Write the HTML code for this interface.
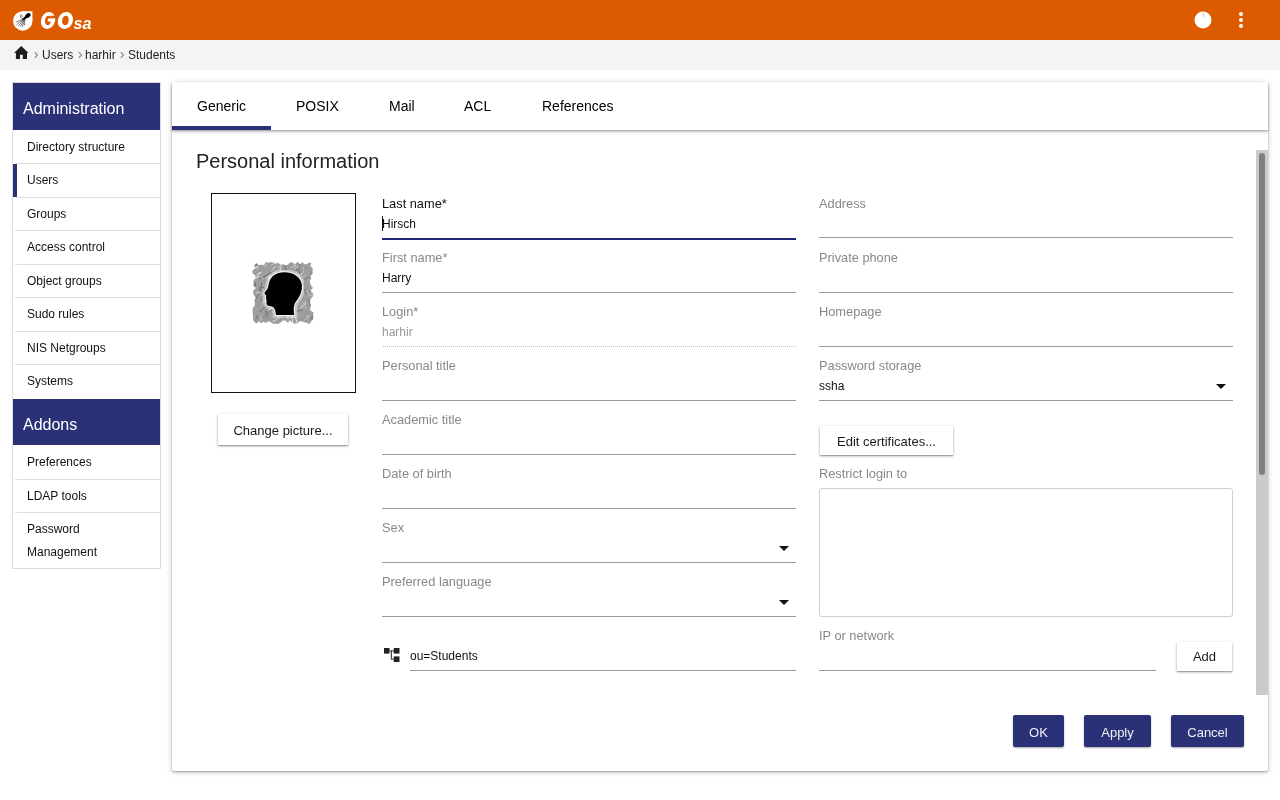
<!DOCTYPE html>
<html><head><meta charset="utf-8">
<style>
*{box-sizing:border-box;margin:0;padding:0}
html,body{will-change:transform;width:1280px;height:800px;overflow:hidden;background:#fff;font-family:"Liberation Sans",sans-serif;color:#222}
.abs{position:absolute}
#hdr{position:absolute;left:0;top:0;width:1280px;height:40px;background:#dc5b00}
#crumb{position:absolute;left:0;top:40px;width:1280px;height:30px;background:#f4f4f4}
.bc{position:absolute;top:48px;font-size:12px;line-height:14px;color:#222;white-space:nowrap}
.chev{position:absolute;top:51px;width:6px;height:8px}
#side{position:absolute;left:12px;top:82px;width:149px;height:487px;border:1px solid #dcdcdc;background:#fff}
.shd{position:absolute;left:13px;width:147px;height:47px;background:#2a3177;color:#fff;font-size:16px;line-height:20px;padding-left:10px;padding-top:16px}
.mt{position:absolute;left:27px;font-size:12px;line-height:14px;color:#111;white-space:nowrap}
.dv{position:absolute;left:13px;width:147px;height:1px;background:linear-gradient(to right,rgba(222,222,222,0) 0px,#dedede 4px)}
#panel{position:absolute;left:172px;top:82px;width:1096px;height:689px;background:#fff;border-radius:2px;box-shadow:0 1px 2px rgba(0,0,0,.3),0 1px 6px rgba(0,0,0,.18)}
#tabs{position:absolute;left:172px;top:82px;width:1096px;height:48px;background:#fff;border-radius:2px 2px 0 0;box-shadow:0 1px 1px rgba(0,0,0,.12),0 2px 3px rgba(0,0,0,.25)}
.tab{position:absolute;top:98px;font-size:14px;line-height:16px;color:#000;white-space:nowrap}
.lbl{position:absolute;font-size:12.8px;line-height:15px;color:#888;white-space:nowrap}
.val{position:absolute;font-size:12px;line-height:14px;color:#111;white-space:nowrap}
.ul{position:absolute;height:1px;background:#9a9a9a}
.btnw{position:absolute;background:#fff;border-radius:0;box-shadow:0 1px 3px rgba(0,0,0,.28),0 1px 1px rgba(0,0,0,.22);padding-top:1px;font-size:13px;color:#1a1a1a;text-align:center;white-space:nowrap}
.btnb{position:absolute;background:#2a3177;border-radius:2px;box-shadow:0 1px 2px rgba(0,0,0,.35);padding-top:2px;font-size:13px;color:#f0f0f4;text-align:center;white-space:nowrap;top:715px;height:32px;line-height:32px}
.arrow{position:absolute;width:0;height:0;border-left:5px solid transparent;border-right:5px solid transparent;border-top:5px solid #111}
</style></head><body>
<div id="hdr"></div>
<!-- logo -->
<svg class="abs" style="left:0;top:0" width="100" height="40" viewBox="0 0 100 40">
<circle cx="22.75" cy="20.95" r="9.7" fill="#fff"/><rect x="22.75" y="11.25" width="9.7" height="9.7" fill="#fff"/>
<ellipse cx="27.9" cy="15.5" rx="3" ry="2.1" transform="rotate(-35 27.9 15.5)" fill="#000"/>
<path d="M26.2 16.8 L23.2 19.6" stroke="#000" stroke-width="2.3" stroke-linecap="round"/>
<path d="M23.5 19 L15.5 22.2 M23.5 19.3 L16.5 24.6 M23.8 19.6 L18.2 26.2 M24.2 19.8 L20.3 26.6 M24.5 20 L22.3 26.9 M25 20 L24.3 25.6" stroke="#555" stroke-width="0.75"/>
<path d="M22.6 18.6 C20.3 18 19.6 15.6 20.8 15.1 C21.8 14.8 22.4 15.8 22.4 17" stroke="#333" stroke-width="0.7" fill="none"/>
<g transform="translate(48.0 20.45) skewX(-7)">
<path d="M-7.1 0 A7.1 8.45 0 1 0 7.1 0 A7.1 8.45 0 1 0 -7.1 0 Z M-3.0 0 A3.0 4.7 0 1 0 3.0 0 A3.0 4.7 0 1 0 -3.0 0 Z" fill="#fff" fill-rule="evenodd"/>
<rect x="1.8" y="-4.75" width="6.5" height="2.7" fill="#dc5b00"/>
<rect x="-0.2" y="-1.95" width="7.3" height="3.1" fill="#fff"/>
</g>
<g transform="translate(65.4 20.45) skewX(-7)">
<path d="M-7.6 0 A7.6 8.45 0 1 0 7.6 0 A7.6 8.45 0 1 0 -7.6 0 Z M-3.3 0 A3.3 4.7 0 1 0 3.3 0 A3.3 4.7 0 1 0 -3.3 0 Z" fill="#fff" fill-rule="evenodd"/>
</g>
<text x="73.5" y="28.6" font-family="Liberation Sans" font-weight="bold" font-style="italic" font-size="17" fill="#fff" textLength="18" lengthAdjust="spacingAndGlyphs">sa</text>
</svg>
<!-- header right -->
<svg class="abs" style="left:1190px;top:8px" width="60" height="24" viewBox="1190 8 60 24">
<circle cx="1203" cy="19.9" r="8.5" fill="#fff"/>
<path d="M1203.4 12.2 V17.2" stroke="#e58040" stroke-width="0.5"/>
<circle cx="1241" cy="14" r="2" fill="#fff"/>
<circle cx="1241" cy="20" r="2" fill="#fff"/>
<circle cx="1241" cy="26" r="2" fill="#fff"/>
</svg>

<div id="crumb"></div>
<svg class="abs" style="left:14px;top:46px" width="15" height="13" viewBox="0 0 15 13"><path d="M7.25 0 L14.5 6.9 H13 V13 H8.8 V8.8 H6 V13 H1.9 V6.9 H0 Z" fill="#1e1e1e"/></svg>
<svg class="chev" style="left:33px" viewBox="0 0 6 8"><path d="M1.8 1.3 L4.5 4 L1.8 6.7" stroke="#8b9bad" stroke-width="1.4" fill="none"/></svg>
<div class="bc" style="left:42px">Users</div>
<svg class="chev" style="left:77px" viewBox="0 0 6 8"><path d="M1.8 1.3 L4.5 4 L1.8 6.7" stroke="#8b9bad" stroke-width="1.4" fill="none"/></svg>
<div class="bc" style="left:85px">harhir</div>
<svg class="chev" style="left:119px" viewBox="0 0 6 8"><path d="M1.8 1.3 L4.5 4 L1.8 6.7" stroke="#8b9bad" stroke-width="1.4" fill="none"/></svg>
<div class="bc" style="left:128px">Students</div>

<!-- sidebar -->
<div id="side"></div>
<div class="shd" style="top:83px;height:47px">Administration</div>
<div class="mt" style="top:140px">Directory structure</div>
<div class="dv" style="top:163px"></div>
<div class="mt" style="top:173px">Users</div>
<div class="dv" style="top:197px"></div>
<div class="mt" style="top:207px">Groups</div>
<div class="dv" style="top:230px"></div>
<div class="mt" style="top:240px">Access control</div>
<div class="dv" style="top:264px"></div>
<div class="mt" style="top:274px">Object groups</div>
<div class="dv" style="top:297px"></div>
<div class="mt" style="top:307px">Sudo rules</div>
<div class="dv" style="top:331px"></div>
<div class="mt" style="top:341px">NIS Netgroups</div>
<div class="dv" style="top:364px"></div>
<div class="mt" style="top:374px">Systems</div>
<div class="abs" style="left:13px;top:164px;width:4px;height:33px;background:#2a3177"></div>
<div class="shd" style="top:399px;height:46px">Addons</div>
<div class="mt" style="top:455px">Preferences</div>
<div class="dv" style="top:479px"></div>
<div class="mt" style="top:489px">LDAP tools</div>
<div class="dv" style="top:512px"></div>
<div class="mt" style="top:522px">Password</div>
<div class="mt" style="top:545px">Management</div>

<!-- panel -->
<div id="panel"></div>
<div id="tabs"></div>
<div class="abs" style="left:172px;top:126px;width:99px;height:4px;background:#2a3177"></div>
<div class="tab" style="left:197px">Generic</div>
<div class="tab" style="left:296px">POSIX</div>
<div class="tab" style="left:389px">Mail</div>
<div class="tab" style="left:464px">ACL</div>
<div class="tab" style="left:542px">References</div>

<div class="abs" style="left:196px;top:150px;font-size:20px;line-height:23px;color:#222">Personal information</div>

<!-- scrollbar -->
<div class="abs" style="left:1256px;top:150px;width:12px;height:545px;background:#cbcbcb"></div>
<div class="abs" style="left:1259px;top:153px;width:6px;height:322px;border-radius:3px;background:#7b7f80"></div>

<!-- photo -->
<div class="abs" style="left:211px;top:193px;width:145px;height:200px;border:1px solid #111"></div>
<svg class="abs" style="left:245px;top:255px" width="75" height="75" viewBox="0 0 800 800">
<defs><clipPath id="stc"><polygon points="95,115 121,86 147,108 172,102 198,109 224,74 250,83 276,75 302,79 328,93 353,82 379,103 405,99 431,110 457,105 482,77 508,80 534,96 560,72 586,99 612,78 638,101 663,93 689,80 708,90 695,116 723,142 721,169 726,195 700,221 707,248 692,274 694,300 706,326 725,352 699,379 722,405 734,431 706,458 697,484 694,510 703,536 697,562 695,589 734,615 727,641 728,668 725,694 715,697 689,736 663,728 638,717 612,709 586,704 560,731 534,731 508,727 482,695 457,722 431,698 405,698 379,721 353,735 328,733 302,736 276,716 250,706 224,726 198,711 172,728 147,707 121,732 108,720 85,694 88,668 84,641 80,615 80,589 84,562 107,536 104,510 99,484 114,458 97,431 86,405 87,379 116,352 84,326 95,300 89,274 110,248 112,221 78,195 77,169 105,142 101,116"/></clipPath><filter id="bl" x="-5%" y="-5%" width="110%" height="110%"><feGaussianBlur stdDeviation="5"/></filter></defs>
<g clip-path="url(#stc)"><g filter="url(#bl)"><rect x="60" y="60" width="690" height="690" fill="#9e9e9e"/><path d="M525 666 q21 -14 31 61" stroke="#d8d8d8" stroke-width="10" fill="none" stroke-linecap="round"/><path d="M255 321 q19 -12 56 -27" stroke="#c4c4c4" stroke-width="8" fill="none" stroke-linecap="round"/><path d="M231 601 q24 -16 6 78" stroke="#7c7c7c" stroke-width="10" fill="none" stroke-linecap="round"/><path d="M233 416 q10 -6 9 -30" stroke="#e4e4e4" stroke-width="9" fill="none" stroke-linecap="round"/><path d="M212 471 q22 -15 67 -29" stroke="#e4e4e4" stroke-width="12" fill="none" stroke-linecap="round"/><path d="M320 229 q13 -8 20 -37" stroke="#c4c4c4" stroke-width="12" fill="none" stroke-linecap="round"/><path d="M474 91 q21 -14 29 62" stroke="#909090" stroke-width="7" fill="none" stroke-linecap="round"/><path d="M335 538 q17 -11 53 -18" stroke="#909090" stroke-width="8" fill="none" stroke-linecap="round"/><path d="M595 702 q26 -17 57 -66" stroke="#909090" stroke-width="7" fill="none" stroke-linecap="round"/><path d="M716 107 q21 -14 23 65" stroke="#c4c4c4" stroke-width="11" fill="none" stroke-linecap="round"/><path d="M708 504 q11 -8 29 -24" stroke="#d8d8d8" stroke-width="11" fill="none" stroke-linecap="round"/><path d="M548 155 q27 -18 48 75" stroke="#6e6e6e" stroke-width="11" fill="none" stroke-linecap="round"/><path d="M223 249 q20 -13 33 -56" stroke="#e4e4e4" stroke-width="9" fill="none" stroke-linecap="round"/><path d="M616 128 q21 -14 3 70" stroke="#c4c4c4" stroke-width="9" fill="none" stroke-linecap="round"/><path d="M668 406 q9 -6 23 -21" stroke="#7c7c7c" stroke-width="11" fill="none" stroke-linecap="round"/><path d="M473 579 q20 -13 28 -61" stroke="#d8d8d8" stroke-width="9" fill="none" stroke-linecap="round"/><path d="M295 417 q11 -7 4 36" stroke="#c4c4c4" stroke-width="6" fill="none" stroke-linecap="round"/><path d="M211 117 q10 -6 22 -23" stroke="#d8d8d8" stroke-width="9" fill="none" stroke-linecap="round"/><path d="M476 408 q17 -11 49 -29" stroke="#c4c4c4" stroke-width="11" fill="none" stroke-linecap="round"/><path d="M410 246 q26 -17 81 -28" stroke="#c4c4c4" stroke-width="11" fill="none" stroke-linecap="round"/><path d="M218 372 q15 -10 32 -37" stroke="#909090" stroke-width="7" fill="none" stroke-linecap="round"/><path d="M136 512 q12 -8 2 39" stroke="#909090" stroke-width="10" fill="none" stroke-linecap="round"/><path d="M321 249 q22 -15 53 -53" stroke="#d8d8d8" stroke-width="8" fill="none" stroke-linecap="round"/><path d="M397 714 q17 -11 30 47" stroke="#c4c4c4" stroke-width="8" fill="none" stroke-linecap="round"/><path d="M355 315 q15 -10 31 -39" stroke="#7c7c7c" stroke-width="9" fill="none" stroke-linecap="round"/><path d="M101 299 q10 -7 10 32" stroke="#6e6e6e" stroke-width="12" fill="none" stroke-linecap="round"/><path d="M156 257 q14 -9 42 -20" stroke="#6e6e6e" stroke-width="11" fill="none" stroke-linecap="round"/><path d="M625 516 q19 -12 23 58" stroke="#c4c4c4" stroke-width="9" fill="none" stroke-linecap="round"/><path d="M531 146 q17 -11 48 -29" stroke="#d8d8d8" stroke-width="8" fill="none" stroke-linecap="round"/><path d="M101 146 q13 -9 35 -26" stroke="#e4e4e4" stroke-width="11" fill="none" stroke-linecap="round"/><path d="M376 304 q14 -9 1 46" stroke="#6e6e6e" stroke-width="6" fill="none" stroke-linecap="round"/><path d="M537 681 q12 -8 19 36" stroke="#e4e4e4" stroke-width="10" fill="none" stroke-linecap="round"/><path d="M425 220 q14 -9 39 -25" stroke="#d8d8d8" stroke-width="12" fill="none" stroke-linecap="round"/><path d="M113 102 q18 -12 59 -14" stroke="#6e6e6e" stroke-width="12" fill="none" stroke-linecap="round"/><path d="M157 606 q24 -16 58 -55" stroke="#7c7c7c" stroke-width="12" fill="none" stroke-linecap="round"/><path d="M284 226 q25 -17 39 -73" stroke="#909090" stroke-width="10" fill="none" stroke-linecap="round"/><path d="M345 309 q10 -7 14 -31" stroke="#909090" stroke-width="11" fill="none" stroke-linecap="round"/><path d="M361 125 q18 -12 24 55" stroke="#e4e4e4" stroke-width="10" fill="none" stroke-linecap="round"/><path d="M526 118 q9 -6 16 -25" stroke="#e4e4e4" stroke-width="12" fill="none" stroke-linecap="round"/><path d="M703 435 q15 -10 47 -11" stroke="#e4e4e4" stroke-width="7" fill="none" stroke-linecap="round"/><path d="M301 143 q13 -9 38 -25" stroke="#d8d8d8" stroke-width="7" fill="none" stroke-linecap="round"/><path d="M605 181 q14 -10 18 44" stroke="#909090" stroke-width="7" fill="none" stroke-linecap="round"/><path d="M459 423 q22 -15 15 71" stroke="#c4c4c4" stroke-width="8" fill="none" stroke-linecap="round"/><path d="M295 710 q21 -14 60 -33" stroke="#d8d8d8" stroke-width="11" fill="none" stroke-linecap="round"/><path d="M540 413 q18 -12 52 -30" stroke="#c4c4c4" stroke-width="11" fill="none" stroke-linecap="round"/><path d="M448 602 q23 -16 67 -40" stroke="#909090" stroke-width="10" fill="none" stroke-linecap="round"/><path d="M527 235 q15 -10 21 -47" stroke="#d8d8d8" stroke-width="8" fill="none" stroke-linecap="round"/><path d="M374 122 q13 -9 34 -29" stroke="#e4e4e4" stroke-width="6" fill="none" stroke-linecap="round"/><path d="M593 561 q21 -14 53 -45" stroke="#d8d8d8" stroke-width="10" fill="none" stroke-linecap="round"/><path d="M389 600 q23 -15 37 66" stroke="#6e6e6e" stroke-width="10" fill="none" stroke-linecap="round"/><path d="M705 401 q21 -14 51 -50" stroke="#d8d8d8" stroke-width="10" fill="none" stroke-linecap="round"/><path d="M495 139 q22 -15 39 -64" stroke="#e4e4e4" stroke-width="10" fill="none" stroke-linecap="round"/><path d="M174 394 q11 -7 35 -8" stroke="#6e6e6e" stroke-width="10" fill="none" stroke-linecap="round"/><path d="M273 415 q11 -7 26 -26" stroke="#c4c4c4" stroke-width="7" fill="none" stroke-linecap="round"/><path d="M706 680 q24 -16 55 -57" stroke="#7c7c7c" stroke-width="12" fill="none" stroke-linecap="round"/><path d="M334 667 q11 -7 21 29" stroke="#909090" stroke-width="9" fill="none" stroke-linecap="round"/><path d="M690 174 q25 -17 26 79" stroke="#909090" stroke-width="8" fill="none" stroke-linecap="round"/><path d="M404 642 q26 -17 38 -78" stroke="#909090" stroke-width="9" fill="none" stroke-linecap="round"/><path d="M280 179 q24 -16 47 -66" stroke="#d8d8d8" stroke-width="8" fill="none" stroke-linecap="round"/><path d="M303 341 q9 -6 16 26" stroke="#909090" stroke-width="8" fill="none" stroke-linecap="round"/><path d="M324 338 q15 -10 13 50" stroke="#7c7c7c" stroke-width="11" fill="none" stroke-linecap="round"/><path d="M628 267 q20 -14 57 -37" stroke="#6e6e6e" stroke-width="7" fill="none" stroke-linecap="round"/><path d="M257 412 q26 -17 55 -68" stroke="#d8d8d8" stroke-width="11" fill="none" stroke-linecap="round"/><path d="M487 665 q22 -15 21 70" stroke="#d8d8d8" stroke-width="12" fill="none" stroke-linecap="round"/><path d="M349 477 q18 -12 56 -20" stroke="#c4c4c4" stroke-width="7" fill="none" stroke-linecap="round"/><path d="M387 307 q27 -18 78 -41" stroke="#e4e4e4" stroke-width="8" fill="none" stroke-linecap="round"/><path d="M240 394 q21 -14 38 57" stroke="#d8d8d8" stroke-width="7" fill="none" stroke-linecap="round"/><path d="M661 403 q27 -18 86 -27" stroke="#7c7c7c" stroke-width="9" fill="none" stroke-linecap="round"/><path d="M435 244 q15 -10 38 -31" stroke="#e4e4e4" stroke-width="8" fill="none" stroke-linecap="round"/><path d="M449 649 q16 -11 20 51" stroke="#c4c4c4" stroke-width="7" fill="none" stroke-linecap="round"/><path d="M260 564 q15 -10 41 -32" stroke="#909090" stroke-width="9" fill="none" stroke-linecap="round"/><path d="M487 634 q13 -9 24 -38" stroke="#7c7c7c" stroke-width="10" fill="none" stroke-linecap="round"/><path d="M362 287 q11 -8 -0 38" stroke="#7c7c7c" stroke-width="10" fill="none" stroke-linecap="round"/><path d="M654 388 q16 -11 33 42" stroke="#c4c4c4" stroke-width="11" fill="none" stroke-linecap="round"/><path d="M703 247 q18 -12 26 -55" stroke="#909090" stroke-width="7" fill="none" stroke-linecap="round"/><path d="M610 532 q11 -7 2 35" stroke="#d8d8d8" stroke-width="6" fill="none" stroke-linecap="round"/><path d="M169 449 q26 -18 76 -43" stroke="#909090" stroke-width="8" fill="none" stroke-linecap="round"/><path d="M491 530 q18 -12 21 -58" stroke="#c4c4c4" stroke-width="7" fill="none" stroke-linecap="round"/><path d="M254 588 q27 -18 68 -58" stroke="#e4e4e4" stroke-width="12" fill="none" stroke-linecap="round"/><path d="M496 647 q13 -9 23 -39" stroke="#7c7c7c" stroke-width="10" fill="none" stroke-linecap="round"/><path d="M284 104 q17 -11 47 -29" stroke="#e4e4e4" stroke-width="7" fill="none" stroke-linecap="round"/><path d="M357 323 q22 -15 63 -37" stroke="#e4e4e4" stroke-width="10" fill="none" stroke-linecap="round"/><path d="M215 592 q13 -8 13 40" stroke="#6e6e6e" stroke-width="8" fill="none" stroke-linecap="round"/><path d="M607 235 q14 -10 43 -21" stroke="#c4c4c4" stroke-width="9" fill="none" stroke-linecap="round"/><path d="M208 231 q26 -17 73 -47" stroke="#6e6e6e" stroke-width="12" fill="none" stroke-linecap="round"/><path d="M124 105 q22 -15 27 67" stroke="#6e6e6e" stroke-width="8" fill="none" stroke-linecap="round"/><path d="M656 647 q26 -17 -2 86" stroke="#e4e4e4" stroke-width="7" fill="none" stroke-linecap="round"/><path d="M501 421 q22 -15 42 -60" stroke="#e4e4e4" stroke-width="12" fill="none" stroke-linecap="round"/><path d="M369 159 q17 -11 19 -52" stroke="#d8d8d8" stroke-width="9" fill="none" stroke-linecap="round"/><path d="M568 329 q23 -16 34 70" stroke="#d8d8d8" stroke-width="6" fill="none" stroke-linecap="round"/><path d="M388 325 q16 -10 26 45" stroke="#7c7c7c" stroke-width="6" fill="none" stroke-linecap="round"/><path d="M349 601 q10 -6 19 26" stroke="#d8d8d8" stroke-width="11" fill="none" stroke-linecap="round"/><path d="M129 213 q16 -10 42 -31" stroke="#e4e4e4" stroke-width="12" fill="none" stroke-linecap="round"/><path d="M479 255 q14 -9 20 42" stroke="#d8d8d8" stroke-width="10" fill="none" stroke-linecap="round"/><path d="M465 598 q24 -16 47 65" stroke="#d8d8d8" stroke-width="9" fill="none" stroke-linecap="round"/><path d="M693 691 q17 -11 29 -48" stroke="#7c7c7c" stroke-width="7" fill="none" stroke-linecap="round"/><path d="M403 95 q21 -14 32 64" stroke="#6e6e6e" stroke-width="10" fill="none" stroke-linecap="round"/><path d="M297 291 q10 -7 31 -15" stroke="#6e6e6e" stroke-width="8" fill="none" stroke-linecap="round"/><path d="M191 347 q19 -13 21 59" stroke="#6e6e6e" stroke-width="12" fill="none" stroke-linecap="round"/><path d="M647 712 q11 -7 13 -33" stroke="#7c7c7c" stroke-width="12" fill="none" stroke-linecap="round"/><path d="M702 199 q25 -17 59 -59" stroke="#6e6e6e" stroke-width="10" fill="none" stroke-linecap="round"/><path d="M624 509 q14 -10 44 -17" stroke="#c4c4c4" stroke-width="8" fill="none" stroke-linecap="round"/><path d="M250 254 q13 -9 20 -39" stroke="#e4e4e4" stroke-width="11" fill="none" stroke-linecap="round"/><path d="M454 296 q18 -12 59 -12" stroke="#6e6e6e" stroke-width="10" fill="none" stroke-linecap="round"/><path d="M153 382 q25 -17 23 -80" stroke="#6e6e6e" stroke-width="11" fill="none" stroke-linecap="round"/><path d="M666 115 q12 -8 16 -38" stroke="#c4c4c4" stroke-width="7" fill="none" stroke-linecap="round"/><path d="M137 413 q23 -15 62 -45" stroke="#909090" stroke-width="12" fill="none" stroke-linecap="round"/><path d="M157 466 q16 -10 26 45" stroke="#6e6e6e" stroke-width="6" fill="none" stroke-linecap="round"/><path d="M720 114 q24 -16 2 79" stroke="#e4e4e4" stroke-width="8" fill="none" stroke-linecap="round"/><path d="M324 481 q18 -12 18 -57" stroke="#7c7c7c" stroke-width="6" fill="none" stroke-linecap="round"/><path d="M154 339 q11 -7 8 35" stroke="#6e6e6e" stroke-width="8" fill="none" stroke-linecap="round"/><path d="M261 713 q10 -7 12 31" stroke="#909090" stroke-width="9" fill="none" stroke-linecap="round"/><path d="M315 352 q16 -10 -1 52" stroke="#6e6e6e" stroke-width="8" fill="none" stroke-linecap="round"/><path d="M345 683 q11 -7 16 -33" stroke="#d8d8d8" stroke-width="8" fill="none" stroke-linecap="round"/><path d="M646 380 q19 -13 18 -61" stroke="#909090" stroke-width="11" fill="none" stroke-linecap="round"/><path d="M340 451 q12 -8 6 40" stroke="#e4e4e4" stroke-width="8" fill="none" stroke-linecap="round"/><path d="M418 673 q23 -16 57 -54" stroke="#6e6e6e" stroke-width="8" fill="none" stroke-linecap="round"/><path d="M617 117 q20 -13 29 60" stroke="#909090" stroke-width="8" fill="none" stroke-linecap="round"/><path d="M660 481 q23 -15 41 65" stroke="#6e6e6e" stroke-width="10" fill="none" stroke-linecap="round"/><path d="M477 214 q10 -7 25 -20" stroke="#c4c4c4" stroke-width="7" fill="none" stroke-linecap="round"/><path d="M316 184 q12 -8 4 41" stroke="#c4c4c4" stroke-width="11" fill="none" stroke-linecap="round"/><path d="M514 511 q17 -11 37 -44" stroke="#909090" stroke-width="11" fill="none" stroke-linecap="round"/><path d="M499 284 q16 -10 33 -40" stroke="#c4c4c4" stroke-width="9" fill="none" stroke-linecap="round"/><path d="M105 480 q23 -15 38 -65" stroke="#7c7c7c" stroke-width="11" fill="none" stroke-linecap="round"/><path d="M601 342 q16 -10 32 -41" stroke="#7c7c7c" stroke-width="9" fill="none" stroke-linecap="round"/><path d="M504 116 q15 -10 47 -14" stroke="#909090" stroke-width="9" fill="none" stroke-linecap="round"/><path d="M124 407 q11 -8 37 -10" stroke="#d8d8d8" stroke-width="12" fill="none" stroke-linecap="round"/><path d="M551 603 q18 -12 58 -13" stroke="#6e6e6e" stroke-width="10" fill="none" stroke-linecap="round"/><path d="M544 229 q14 -9 11 44" stroke="#e4e4e4" stroke-width="11" fill="none" stroke-linecap="round"/><path d="M263 604 q26 -17 62 -58" stroke="#6e6e6e" stroke-width="10" fill="none" stroke-linecap="round"/><path d="M478 240 q16 -11 25 -48" stroke="#909090" stroke-width="12" fill="none" stroke-linecap="round"/><path d="M518 654 q11 -7 33 -16" stroke="#c4c4c4" stroke-width="6" fill="none" stroke-linecap="round"/><path d="M631 699 q21 -14 53 -47" stroke="#d8d8d8" stroke-width="8" fill="none" stroke-linecap="round"/><path d="M427 630 q16 -11 21 48" stroke="#e4e4e4" stroke-width="9" fill="none" stroke-linecap="round"/><path d="M317 572 q22 -15 33 -67" stroke="#d8d8d8" stroke-width="8" fill="none" stroke-linecap="round"/><path d="M415 285 q26 -17 5 86" stroke="#e4e4e4" stroke-width="10" fill="none" stroke-linecap="round"/><path d="M561 230 q17 -11 45 -32" stroke="#e4e4e4" stroke-width="11" fill="none" stroke-linecap="round"/><path d="M173 233 q9 -6 18 24" stroke="#e4e4e4" stroke-width="8" fill="none" stroke-linecap="round"/><path d="M420 426 q11 -8 22 -31" stroke="#e4e4e4" stroke-width="10" fill="none" stroke-linecap="round"/><path d="M389 175 q12 -8 19 34" stroke="#d8d8d8" stroke-width="6" fill="none" stroke-linecap="round"/><path d="M181 509 q26 -18 81 -35" stroke="#d8d8d8" stroke-width="10" fill="none" stroke-linecap="round"/><path d="M444 311 q26 -17 30 81" stroke="#909090" stroke-width="9" fill="none" stroke-linecap="round"/><path d="M194 90 q12 -8 12 -39" stroke="#6e6e6e" stroke-width="6" fill="none" stroke-linecap="round"/><path d="M581 98 q12 -8 0 39" stroke="#6e6e6e" stroke-width="9" fill="none" stroke-linecap="round"/><path d="M495 498 q18 -12 49 -35" stroke="#d8d8d8" stroke-width="8" fill="none" stroke-linecap="round"/><path d="M121 650 q9 -6 5 30" stroke="#7c7c7c" stroke-width="10" fill="none" stroke-linecap="round"/><path d="M383 557 q11 -7 18 -32" stroke="#6e6e6e" stroke-width="10" fill="none" stroke-linecap="round"/><path d="M168 652 q14 -9 0 46" stroke="#d8d8d8" stroke-width="8" fill="none" stroke-linecap="round"/><path d="M439 365 q14 -9 14 44" stroke="#909090" stroke-width="12" fill="none" stroke-linecap="round"/><path d="M653 144 q25 -17 37 -76" stroke="#909090" stroke-width="7" fill="none" stroke-linecap="round"/><path d="M190 666 q20 -13 42 -51" stroke="#7c7c7c" stroke-width="11" fill="none" stroke-linecap="round"/><path d="M487 526 q17 -12 -1 58" stroke="#c4c4c4" stroke-width="10" fill="none" stroke-linecap="round"/><path d="M630 365 q15 -10 13 47" stroke="#6e6e6e" stroke-width="8" fill="none" stroke-linecap="round"/><path d="M459 446 q11 -7 11 -35" stroke="#c4c4c4" stroke-width="12" fill="none" stroke-linecap="round"/><path d="M307 179 q21 -14 22 -68" stroke="#909090" stroke-width="6" fill="none" stroke-linecap="round"/><path d="M133 119 q13 -8 6 42" stroke="#c4c4c4" stroke-width="11" fill="none" stroke-linecap="round"/><path d="M132 637 q11 -7 0 36" stroke="#6e6e6e" stroke-width="7" fill="none" stroke-linecap="round"/><path d="M111 688 q11 -7 5 35" stroke="#909090" stroke-width="10" fill="none" stroke-linecap="round"/><path d="M391 174 q14 -10 10 47" stroke="#e4e4e4" stroke-width="9" fill="none" stroke-linecap="round"/><path d="M103 252 q16 -10 45 -26" stroke="#e4e4e4" stroke-width="11" fill="none" stroke-linecap="round"/></g></g>
<path d="M330 640 L525 640 C520 590 515 540 540 500 C590 440 612 380 607 320 C597 230 510 183 420 183 C330 183 270 230 255 300 C250 330 245 345 240 360 C225 385 203 395 208 410 C213 420 225 425 225 435 C220 445 230 455 225 465 C222 480 235 485 230 500 C225 520 235 540 260 545 C300 550 325 560 330 640 Z" fill="none" stroke="#fff" stroke-opacity="0.4" stroke-width="70" filter="url(#bl)"/>
<path d="M330 640 L525 640 C520 590 515 540 540 500 C590 440 612 380 607 320 C597 230 510 183 420 183 C330 183 270 230 255 300 C250 330 245 345 240 360 C225 385 203 395 208 410 C213 420 225 425 225 435 C220 445 230 455 225 465 C222 480 235 485 230 500 C225 520 235 540 260 545 C300 550 325 560 330 640 Z" fill="#000" stroke="#f4f4f4" stroke-width="22"/>
<path d="M330 640 L525 640 C520 590 515 540 540 500 C590 440 612 380 607 320 C597 230 510 183 420 183 C330 183 270 230 255 300 C250 330 245 345 240 360 C225 385 203 395 208 410 C213 420 225 425 225 435 C220 445 230 455 225 465 C222 480 235 485 230 500 C225 520 235 540 260 545 C300 550 325 560 330 640 Z" fill="#000"/>
</svg>
<div class="btnw" style="left:218px;top:414px;width:130px;height:31px;line-height:31px">Change picture...</div>

<!-- left column -->
<div class="lbl" style="left:382px;top:196px;color:#111">Last name*</div>
<div class="val" style="left:382px;top:217px">Hirsch</div>
<div class="abs" style="left:382px;top:216px;width:1px;height:15px;background:#111"></div>
<div class="ul" style="left:382px;top:238px;width:414px;height:2px;background:#1f2672"></div>

<div class="lbl" style="left:382px;top:250px">First name*</div>
<div class="val" style="left:382px;top:271px">Harry</div>
<div class="ul" style="left:382px;top:292px;width:414px"></div>

<div class="lbl" style="left:382px;top:304px">Login*</div>
<div class="val" style="left:382px;top:325px;color:#999">harhir</div>
<div class="ul" style="left:383px;top:346px;width:413px;background:none;border-top:1px dotted #c0c0c0"></div>

<div class="lbl" style="left:382px;top:358px">Personal title</div>
<div class="ul" style="left:382px;top:400px;width:414px"></div>

<div class="lbl" style="left:382px;top:412px">Academic title</div>
<div class="ul" style="left:382px;top:454px;width:414px"></div>

<div class="lbl" style="left:382px;top:466px">Date of birth</div>
<div class="ul" style="left:382px;top:508px;width:414px"></div>

<div class="lbl" style="left:382px;top:520px">Sex</div>
<div class="arrow" style="left:779px;top:546px"></div>
<div class="ul" style="left:382px;top:562px;width:414px"></div>

<div class="lbl" style="left:382px;top:574px">Preferred language</div>
<div class="arrow" style="left:779px;top:600px"></div>
<div class="ul" style="left:382px;top:616px;width:414px"></div>

<svg class="abs" style="left:384px;top:648px" width="16" height="14" viewBox="0 0 16 14"><rect x="0" y="0" width="5.5" height="5.6" fill="#222"/><rect x="9.7" y="0" width="5.8" height="5.6" fill="#222"/><rect x="9.7" y="8.4" width="5.8" height="5.6" fill="#222"/><path d="M5.5 2.8 H9.7 M7.4 2.8 V11.2 H9.7" stroke="#444" stroke-width="1.2" fill="none"/></svg>
<div class="val" style="left:410px;top:649px">ou=Students</div>
<div class="ul" style="left:410px;top:670px;width:386px"></div>

<!-- right column -->
<div class="lbl" style="left:819px;top:196px">Address</div>
<div class="ul" style="left:819px;top:237px;width:414px"></div>

<div class="lbl" style="left:819px;top:250px">Private phone</div>
<div class="ul" style="left:819px;top:292px;width:414px"></div>

<div class="lbl" style="left:819px;top:304px">Homepage</div>
<div class="ul" style="left:819px;top:346px;width:414px"></div>

<div class="lbl" style="left:819px;top:358px">Password storage</div>
<div class="val" style="left:819px;top:379px">ssha</div>
<div class="arrow" style="left:1216px;top:384px"></div>
<div class="ul" style="left:819px;top:400px;width:414px"></div>

<div class="btnw" style="left:820px;top:426px;width:133px;height:29px;line-height:29px">Edit certificates...</div>

<div class="lbl" style="left:819px;top:466px">Restrict login to</div>
<div class="abs" style="left:819px;top:488px;width:414px;height:129px;border:1px solid #cfcfcf;border-radius:3px"></div>

<div class="lbl" style="left:819px;top:628px">IP or network</div>
<div class="ul" style="left:819px;top:670px;width:337px"></div>
<div class="btnw" style="left:1177px;top:642px;width:55px;height:29px;line-height:29px;padding-top:0">Add</div>

<!-- bottom buttons -->
<div class="btnb" style="left:1013px;width:51px">OK</div>
<div class="btnb" style="left:1084px;width:67px">Apply</div>
<div class="btnb" style="left:1171px;width:73px">Cancel</div>
</body></html>
